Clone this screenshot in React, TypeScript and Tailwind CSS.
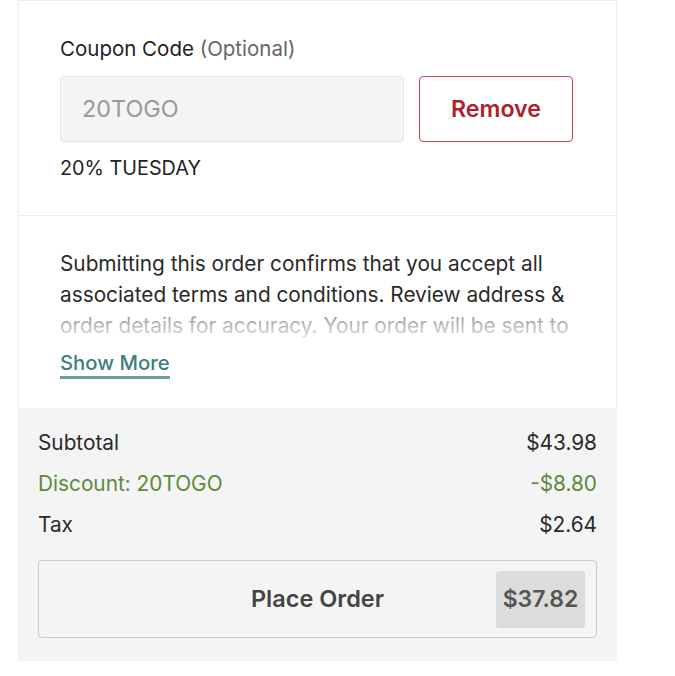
import React from "react";

export default function App() {
  return (
    <div className="w-[675px] h-[676px] bg-white" style={{ fontFamily: "Inter, 'Noto Sans', sans-serif" }}>
      <div className="ml-[18px] w-[599px] border-t border-l border-r border-[#ececec] bg-white">
        {/* Coupon section */}
        <div className="pt-[36px] px-[41px] pb-[35px] border-b border-[#ececec]">
          <div className="text-[20.5px] leading-[24px] text-[#222]">
            Coupon Code <span className="text-[#666]">(Optional)</span>
          </div>
          <div className="mt-[15px] flex gap-[15px]">
            <div className="w-[344px] h-[66px] rounded-[4px] border border-[#e6e6e6] bg-[#f4f4f4] flex items-center pl-[21px] text-[23.4px] text-[#9a9a9a]">
              20TOGO
            </div>
            <div className="w-[154px] h-[66px] rounded-[4px] border-[1.5px] border-[#c9474b] flex items-center justify-center text-[23.2px] font-semibold text-[#b01f2b]">
              Remove
            </div>
          </div>
          <div className="mt-[14px] text-[19.8px] leading-[24px] text-[#222]">20% TUESDAY</div>
        </div>
        {/* Terms section */}
        <div className="pt-[32px] px-[41px] h-[192px]">
          <div className="relative h-[93px] overflow-hidden text-[20.8px] leading-[31px] text-[#2a2a2a]">
            <p>
              Submitting this order confirms that you accept all associated terms and conditions. Review address &amp; order details for accuracy. Your order will be sent to the restaurant once submitted.
            </p>
            <div className="absolute left-0 right-0 bottom-0 h-[34px] bg-gradient-to-b from-white/40 to-white/90" />
          </div>
          <div className="mt-[10px] inline-block text-[20.3px] leading-[24px] font-medium text-[#3d7f7b] border-b-[3px] border-[#6c9f9b] pb-[1px]">
            Show More
          </div>
        </div>
      </div>
      {/* Summary */}
      <div className="ml-[18px] w-[599px] h-[253px] bg-[#f4f4f4] px-[20px] pt-[14px]">
        <div className="flex justify-between items-center h-[41px] text-[20.8px] text-[#2a2a2a]">
          <span>Subtotal</span>
          <span>$43.98</span>
        </div>
        <div className="flex justify-between items-center h-[41px] text-[20.8px] text-[#5b8a3c]">
          <span>Discount: 20TOGO</span>
          <span>-$8.80</span>
        </div>
        <div className="flex justify-between items-center h-[41px] text-[20.8px] text-[#2a2a2a]">
          <span>Tax</span>
          <span>$2.64</span>
        </div>
        <div className="mt-[15px] relative h-[78px] rounded-[4px] border border-[#c8c8c8] bg-[#f4f4f4] flex items-center justify-center">
          <span className="text-[23.5px] font-semibold text-[#444]">Place Order</span>
          <div className="absolute right-[11px] top-[10px] w-[89px] h-[57px] rounded-[3px] bg-[#dcdcdc] flex items-center justify-center text-[23px] font-semibold text-[#555]">
            $37.82
          </div>
        </div>
      </div>
    </div>
  );
}
